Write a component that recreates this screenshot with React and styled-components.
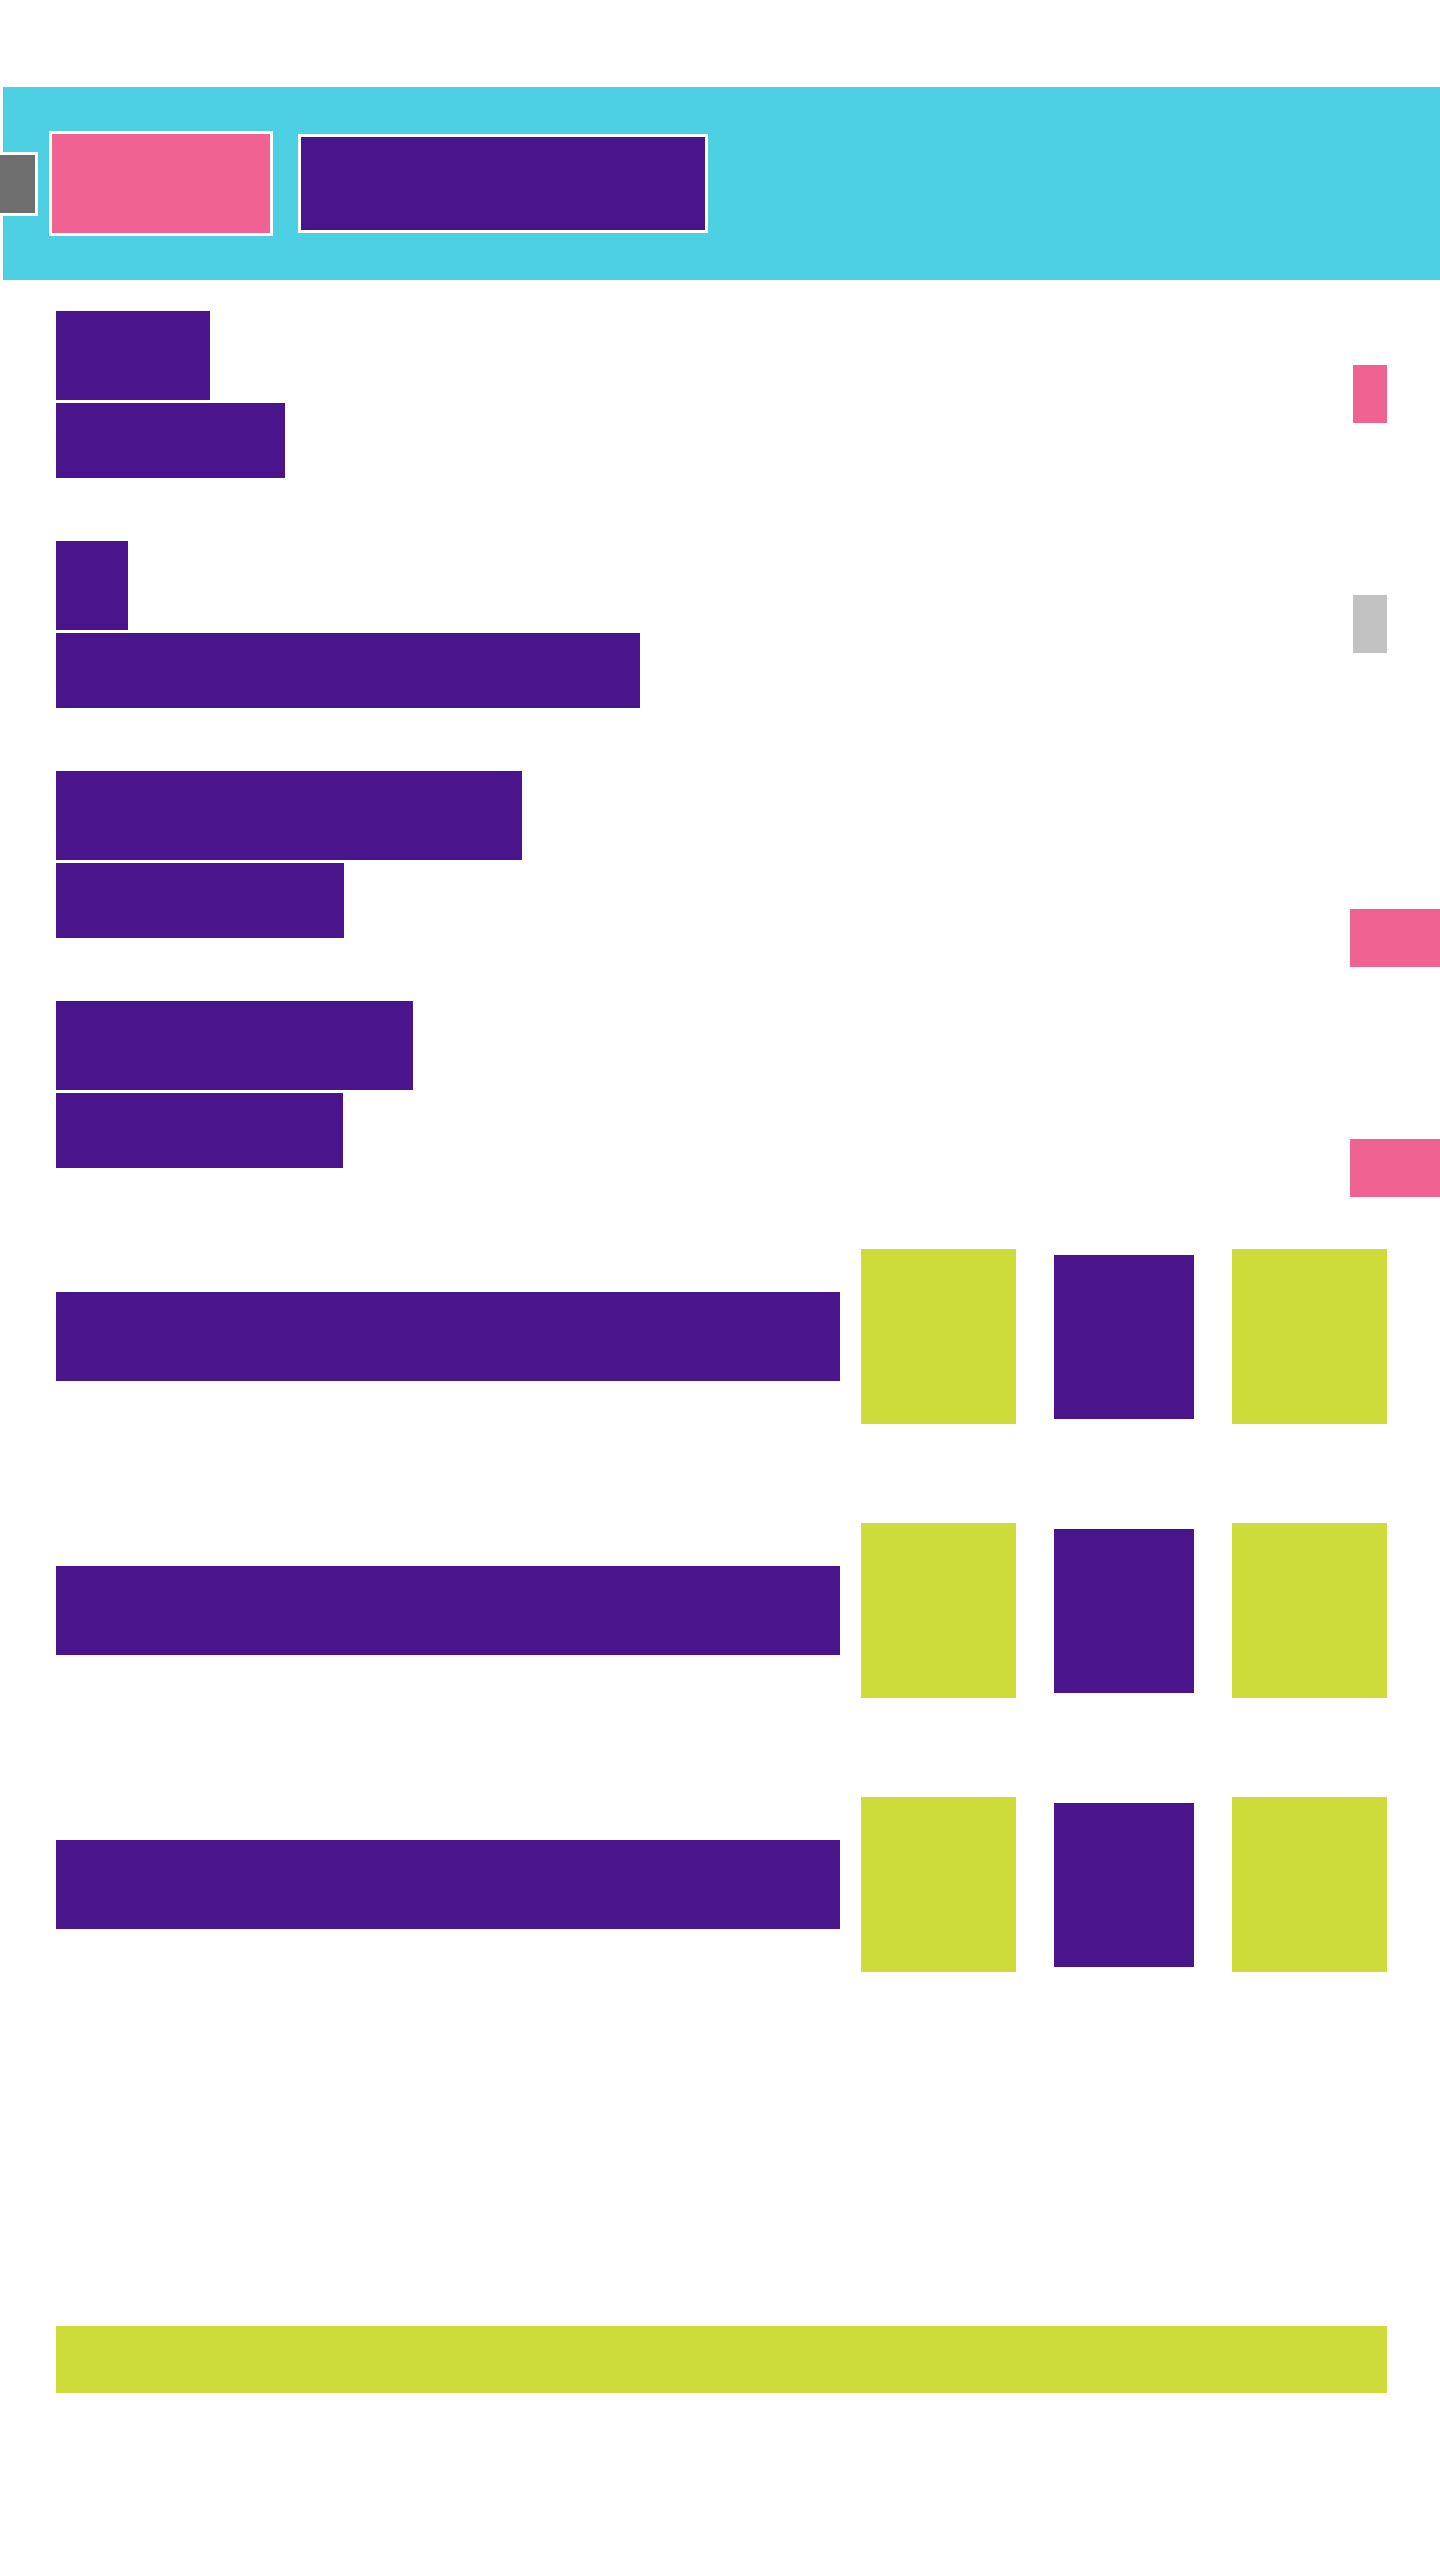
import React from "react";
import styled, { createGlobalStyle } from "styled-components";

const C = {
  cyan: "#4dd0e1",
  pink: "#f06292",
  purple: "#4a148c",
  lime: "#cddc39",
  gray: "#6e6e6e",
  light: "#c2c2c2",
};

const Global = createGlobalStyle`
  html, body { margin: 0; padding: 0; background: #ffffff; }
  body { font-family: "Liberation Sans", Arial, sans-serif; overflow-x: hidden; }
  * { box-sizing: border-box; }
`;

const Page = styled.div`
  width: 1440px;
  min-height: 2560px;
  padding-top: 87px;
  display: flex;
  flex-direction: column;
`;

const Header = styled.header`
  margin-left: 3px;
  height: 193px;
  background: ${C.cyan};
  display: flex;
  align-items: center;
`;

const MenuButton = styled.div`
  width: 48px;
  height: 64px;
  margin-left: -13px;
  background: ${C.gray};
  border: 3px solid #fff;
`;

const Brand = styled.div`
  width: 224px;
  height: 105px;
  margin-left: 11px;
  background: ${C.pink};
  border: 3px solid #fff;
`;

const Title = styled.div`
  width: 410px;
  height: 99px;
  margin-left: 25px;
  background: ${C.purple};
  border: 3px solid #fff;
`;

const Section = styled.section`
  margin-top: 31px;
  display: flex;
  justify-content: space-between;
  align-items: flex-start;
`;

const List = styled.div`
  padding-left: 56px;
  display: flex;
  flex-direction: column;
  gap: 63px;
`;

const Item = styled.div`
  display: flex;
  flex-direction: column;
  gap: 3px;
`;

const ItemTitle = styled.div`
  width: ${(p) => p.$w}px;
  height: 89px;
  background: ${C.purple};
`;

const ItemSub = styled.div`
  width: ${(p) => p.$w}px;
  height: 75px;
  background: ${C.purple};
`;

const Rail = styled.div`
  padding-top: 54px;
  display: flex;
  flex-direction: column;
  align-items: flex-end;
`;

const Toggle = styled.div`
  width: ${(p) => (p.$wide ? 90 : 34)}px;
  height: 58px;
  margin-top: ${(p) => p.$mt || 0}px;
  margin-right: ${(p) => (p.$wide ? 0 : 53)}px;
  background: ${(p) => (p.$off ? C.light : C.pink)};
`;

const Rows = styled.div`
  margin-top: 52px;
  padding: 0 53px 0 56px;
  display: flex;
  flex-direction: column;
  gap: 99px;
`;

const Row = styled.div`
  display: flex;
  align-items: center;
`;

const RowLabel = styled.div`
  flex: 1;
  height: 89px;
  margin-right: 21px;
  background: ${C.purple};
`;

const Tile = styled.div`
  width: 155px;
  height: 175px;
  background: ${C.lime};
`;

const Count = styled.div`
  width: 140px;
  height: 164px;
  margin: 0 38px;
  background: ${C.purple};
`;

const Footer = styled.div`
  margin: 354px 53px 0 56px;
  height: 67px;
  background: ${C.lime};
`;

const items = [
  [154, 229],
  [72, 584],
  [466, 288],
  [357, 287],
];

export default function App() {
  return (
    <Page>
      <Global />
      <Header>
        <MenuButton />
        <Brand />
        <Title />
      </Header>
      <Section>
        <List>
          {items.map(([a, b], i) => (
            <Item key={i}>
              <ItemTitle $w={a} />
              <ItemSub $w={b} />
            </Item>
          ))}
        </List>
        <Rail>
          <Toggle />
          <Toggle $off $mt={172} />
          <Toggle $wide $mt={256} />
          <Toggle $wide $mt={172} />
        </Rail>
      </Section>
      <Rows>
        {[0, 1, 2].map((i) => (
          <Row key={i}>
            <RowLabel />
            <Tile />
            <Count />
            <Tile />
          </Row>
        ))}
      </Rows>
      <Footer />
    </Page>
  );
}
